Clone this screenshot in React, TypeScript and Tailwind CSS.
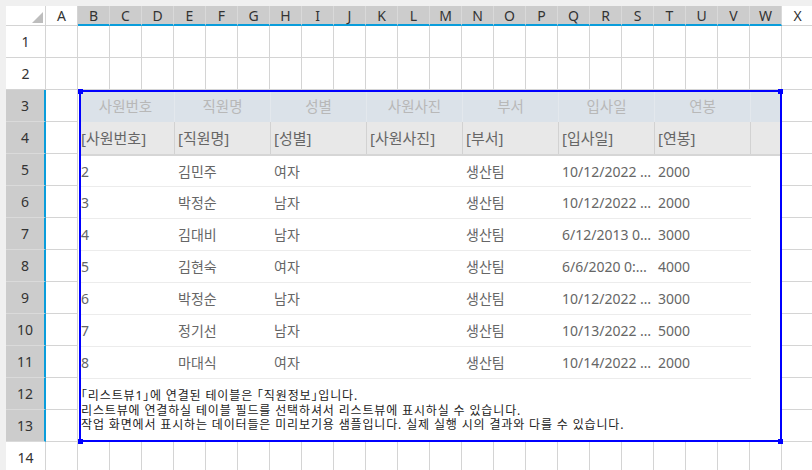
const letters = "ABCDEFGHIJKLMNOPQRSTUVWX".split("");

const fields = ["사원번호", "직원명", "성별", "사원사진", "부서", "입사일", "연봉"];

const records = [
  ["2", "김민주", "여자", "", "생산팀", "10/12/2022 …", "2000"],
  ["3", "박정순", "남자", "", "생산팀", "10/12/2022 …", "2000"],
  ["4", "김대비", "남자", "", "생산팀", "6/12/2013 0…", "3000"],
  ["5", "김현숙", "여자", "", "생산팀", "6/6/2020 0:…", "4000"],
  ["6", "박정순", "남자", "", "생산팀", "10/12/2022 …", "3000"],
  ["7", "정기선", "남자", "", "생산팀", "10/13/2022 …", "5000"],
  ["8", "마대식", "여자", "", "생산팀", "10/14/2022 …", "2000"],
];

// first list column sits partly under the selection border
const colWidth = (i: number) => (i === 0 ? "w-[94px]" : "w-[96px]");

function ColHead({ letter }: { letter: string }) {
  const active = letter !== "A" && letter !== "X";
  if (active) {
    return (
      <div className="flex items-center justify-center border-r border-b-2 border-r-[#d9d9d9] border-b-[#0a9ddb] bg-[#cccccc] text-[14px] text-[#333]">
        {letter}
      </div>
    );
  }
  return (
    <div className="flex items-center justify-center border-r border-b border-[#d4d4d4] bg-white text-[14px] text-[#333]">
      {letter}
    </div>
  );
}

function RowHead({ n }: { n: number }) {
  const active = n >= 3 && n <= 13;
  if (active) {
    return (
      <div className="flex items-center justify-center border-r-2 border-b border-r-[#0a9ddb] border-b-[#dadada] bg-[#cccccc] text-[14px] text-[#333]">
        {n}
      </div>
    );
  }
  return (
    <div className="flex items-center justify-center border-r border-b border-[#d4d4d4] bg-white text-[14px] text-[#333]">
      {n}
    </div>
  );
}

function Cell() {
  return <div className="border-r border-b border-[#d4d4d4]" />;
}

function ListView() {
  return (
    <div className="relative z-10 col-span-22 col-start-3 row-span-11 row-start-4 ml-[1px] flex flex-col border-2 border-[#0000ff] bg-white">
      {/* caption row */}
      <div className="flex h-[30px] shrink-0 bg-[#dbe2e9]">
        {fields.map((f, i) => (
          <div
            key={f}
            className={`${colWidth(i)} ${i === 0 ? "pr-[4px]" : ""} flex items-center justify-center border-r border-[#e3e8ed] text-[14.5px] text-[#b8b8b8]`}
          >
            {f}
          </div>
        ))}
        <div className="flex-1" />
      </div>

      {/* bound field row */}
      <div className="flex h-[34px] shrink-0 border-b-2 border-[#d6d6d6] bg-[#e8e8e8]">
        {fields.map((f, i) => (
          <div
            key={f}
            className={`${colWidth(i)} ${i === 0 ? "pl-0" : "pl-[3px]"} flex items-center border-r border-[#d2d2d2] text-[15px] text-[#666]`}
          >
            [{f}]
          </div>
        ))}
        <div className="flex-1" />
      </div>

      {records.map((r, ri) => (
        <div
          key={ri}
          className={`${ri === 0 ? "h-[31px]" : "h-[32px]"} flex w-[670px] shrink-0 border-b border-[#ececec]`}
        >
          {r.map((v, i) => (
            <div
              key={i}
              className={`${colWidth(i)} ${i === 0 ? "pl-0" : "pl-[3px]"} flex items-center overflow-hidden whitespace-nowrap text-[14px] text-[#666]`}
            >
              {v}
            </div>
          ))}
        </div>
      ))}

      <div className="flex-1 pt-[10px] text-[12px] leading-[14.5px] tracking-[0.85px] text-[#222] [font-feature-settings:'halt']">
        <p>「리스트뷰1」에 연결된 테이블은 「직원정보」입니다.</p>
        <p>리스트뷰에 연결하실 테이블 필드를 선택하셔서 리스트뷰에 표시하실 수 있습니다.</p>
        <p>작업 화면에서 표시하는 데이터들은 미리보기용 샘플입니다. 실제 실행 시의 결과와 다를 수 있습니다.</p>
      </div>

      {/* resize handles */}
      <span className="absolute -top-[3px] -left-[3px] h-[5px] w-[5px] bg-[#0000ff]" />
      <span className="absolute -top-[3px] -right-[3px] h-[5px] w-[5px] bg-[#0000ff]" />
      <span className="absolute -bottom-[4px] -left-[3px] h-[5px] w-[5px] bg-[#0000ff]" />
      <span className="absolute -right-[3px] -bottom-[4px] h-[5px] w-[5px] bg-[#0000ff]" />
    </div>
  );
}

export default function App() {
  const sheetRows = Array.from({ length: 14 }, (_, i) => i + 1);

  return (
    <div className="h-[470px] w-[812px] overflow-hidden bg-[#f0f0f0] pt-[6px] pl-[6px] font-['Noto_Sans','Noto_Sans_CJK_KR',sans-serif]">
      <div className="grid w-[808px] grid-cols-[40px_repeat(24,32px)] grid-rows-[20px_repeat(14,32px)] bg-white">
        <ListView />

        {/* corner */}
        <div className="flex items-end justify-end border-r border-b border-[#d4d4d4] pr-[2px] pb-[2px]">
          <svg width="11" height="11" viewBox="0 0 11 11">
            <polygon points="11,0 11,11 0,11" fill="#bdbdbd" />
          </svg>
        </div>
        {letters.map((l) => (
          <ColHead key={l} letter={l} />
        ))}

        {sheetRows.map((n) => {
          const covered = n >= 3 && n <= 13;
          return [
            <RowHead key={`h${n}`} n={n} />,
            ...letters
              .filter((l) => !covered || l === "A" || l === "X")
              .map((l) => <Cell key={`${l}${n}`} />),
          ];
        })}
      </div>
    </div>
  );
}
